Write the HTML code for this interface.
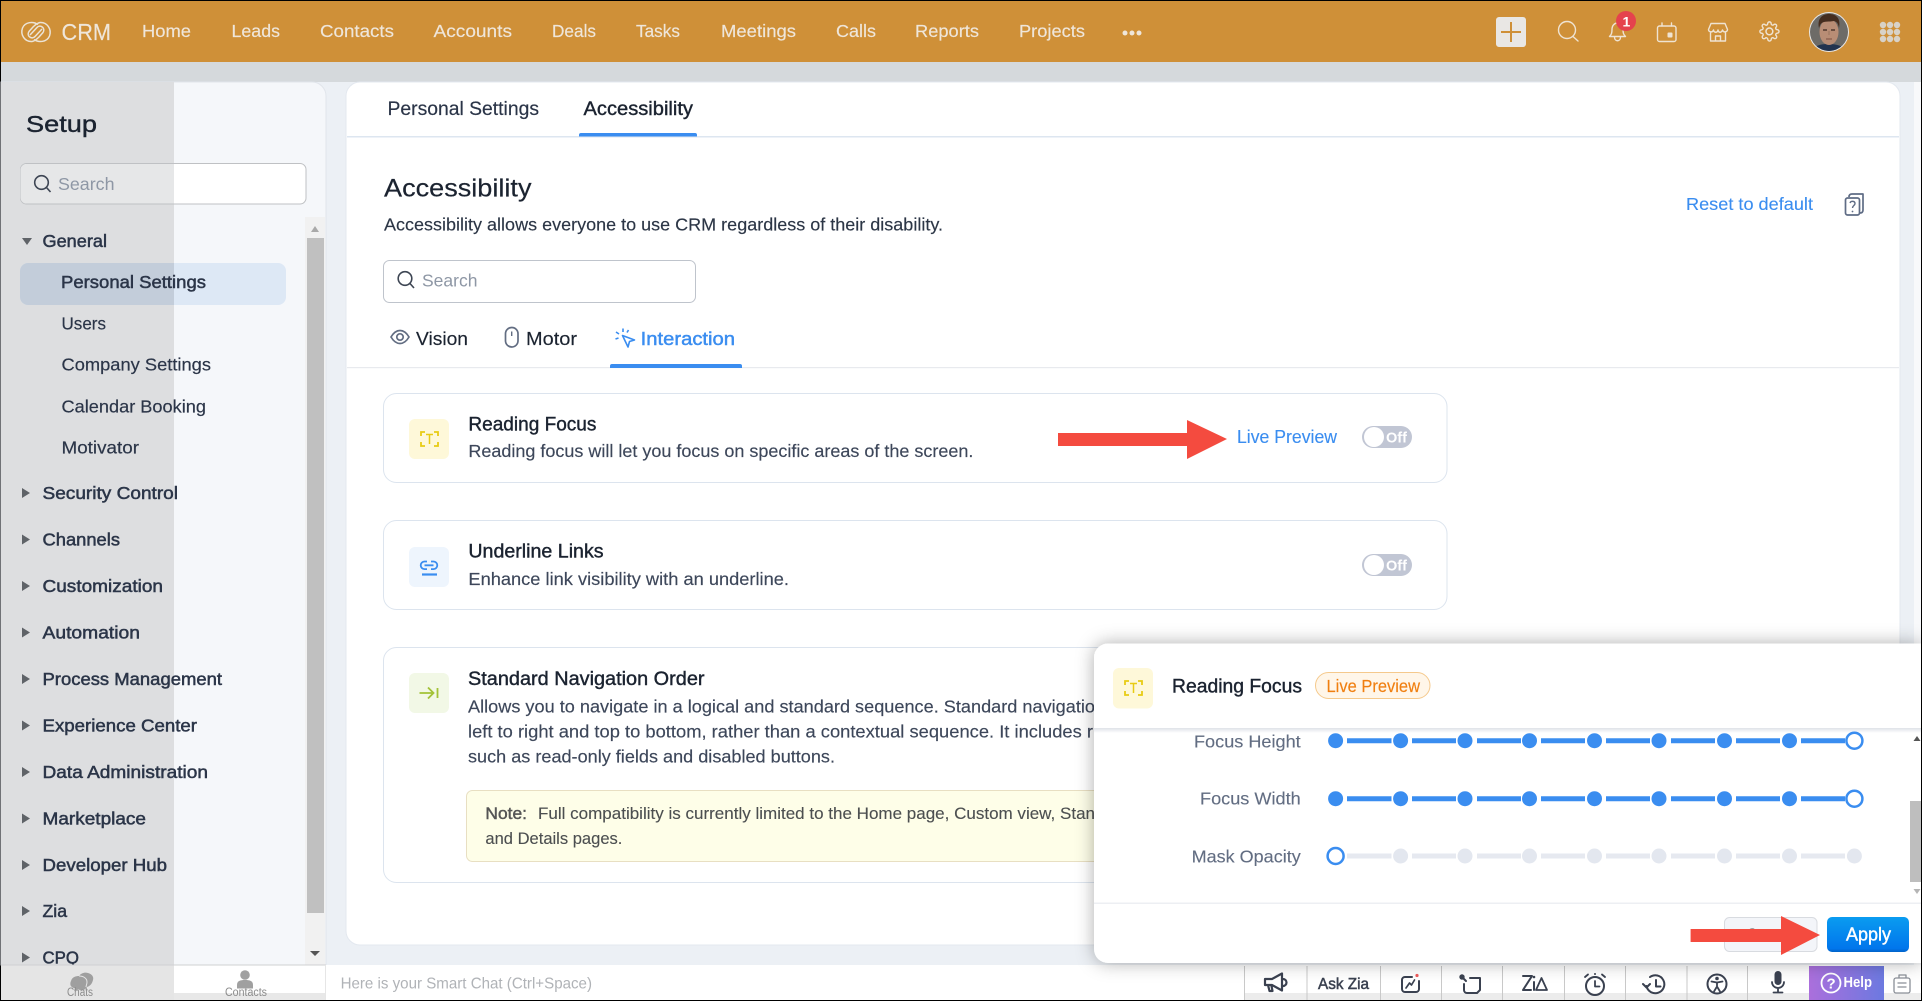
<!DOCTYPE html>
<html><head><meta charset="utf-8"><title>Accessibility</title>
<style>
html,body{margin:0;padding:0;background:#000;overflow:hidden}
svg{display:block}
text{font-family:"Liberation Sans",sans-serif;font-size:17.5px;white-space:pre}
.h{fill:#efe6da;stroke:#efe6da;stroke-width:.15}
.s{fill:#2b3548;stroke:#2b3548;stroke-width:.18}
.sm{fill:#2b3548;stroke:#2b3548;stroke-width:.5}
.d{fill:#1b2330;stroke:#1b2330;stroke-width:.4}
.p{fill:#3d475a;stroke:#3d475a;stroke-width:.15}
.b{fill:#3a8df0;stroke:#3a8df0;stroke-width:.12}
.ph{fill:#8e97a5}
.l{fill:#626d82;stroke:#626d82;stroke-width:.12}
</style></head><body>
<svg xmlns="http://www.w3.org/2000/svg" width="1922" height="1001" viewBox="0 0 1922 1001">
<defs>
<clipPath id="lft"><rect x="0" y="0" width="174" height="1001"/></clipPath>
<clipPath id="av"><circle cx="1829" cy="32" r="19"/></clipPath>
<filter id="sh" x="-5%" y="-10%" width="110%" height="120%"><feDropShadow dx="0" dy="0" stdDeviation="9" flood-color="#000" flood-opacity=".32"/></filter>
<linearGradient id="apply" x1="0" y1="0" x2="0" y2="1"><stop offset="0" stop-color="#0a9cf0"/><stop offset=".9" stop-color="#0176ec"/><stop offset="1" stop-color="#0163c8"/></linearGradient>
<linearGradient id="help" x1="0" y1="0" x2="1" y2="0"><stop offset="0" stop-color="#ab6fdc"/><stop offset="1" stop-color="#6c79e0"/></linearGradient>
<linearGradient id="hs" x1="0" y1="0" x2="0" y2="1"><stop offset="0" stop-color="#dfe2e8"/><stop offset="1" stop-color="#fff"/></linearGradient>
<g id="focus" fill="none" stroke="#e8cb14" stroke-width="1.800"><path d="M0 5V1H4M13 1h4V5M0 11v4h4M13 15h4v-4"/><path d="M5 3.500H12M8.500 3.500V13" stroke-width="1.500"/></g>
<g id="sl"><path d="M1347 0h44.500M1412 0h44M1477 0h44M1541 0h44M1606 0h44M1671 0h44M1736 0h44M1801 0h44" stroke="#3a8df0" stroke-width="5"/>
<g fill="#3a8df0"><circle cx="1335.600" cy="0" r="7.500"/><circle cx="1400.600" cy="0" r="7.500"/><circle cx="1465" cy="0" r="7.500"/><circle cx="1529.500" cy="0" r="7.500"/><circle cx="1594.500" cy="0" r="7.500"/><circle cx="1659" cy="0" r="7.500"/><circle cx="1724.500" cy="0" r="7.500"/><circle cx="1789.500" cy="0" r="7.500"/></g>
<circle cx="1854.400" cy="0" r="8" fill="#fff" stroke="#3a8df0" stroke-width="2.500"/></g>
</defs>

<!-- page -->
<rect x="1" y="1" width="1920" height="999" fill="#ecf0f5"/>
<rect x="1" y="1" width="1920" height="61" fill="#cf9038"/>
<rect x="1" y="62" width="1920" height="20" fill="#d5d9dc"/>
<rect x="1914" y="82" width="7" height="883" fill="#f8f9fb"/>

<!-- header -->
<g fill="none" stroke="#ebe3d6" stroke-width="1.500"><path d="M38 24.500C33 21 25 22 22.500 28C20 35 25 42 32 41.500C35 41 37 39 39 37L43 32.500C46 28 40 24 37 27.500L30 35"/><path d="M38 24.500C33 21 25 22 22.500 28C20 35 25 42 32 41.500C35 41 37 39 39 37L43 32.500C46 28 40 24 37 27.500L30 35" transform="rotate(180 36 32)"/></g>
<text class="h" x="61.500" y="40" style="font-size:23px" textLength="49.500" lengthAdjust="spacingAndGlyphs">CRM</text>
<text class="h" x="142" y="37" textLength="49" lengthAdjust="spacingAndGlyphs">Home</text>
<text class="h" x="231.500" y="37" textLength="48.500" lengthAdjust="spacingAndGlyphs">Leads</text>
<text class="h" x="320" y="37" textLength="74" lengthAdjust="spacingAndGlyphs">Contacts</text>
<text class="h" x="433.500" y="37" textLength="78.500" lengthAdjust="spacingAndGlyphs">Accounts</text>
<text class="h" x="552" y="37" textLength="44" lengthAdjust="spacingAndGlyphs">Deals</text>
<text class="h" x="636" y="37" textLength="44" lengthAdjust="spacingAndGlyphs">Tasks</text>
<text class="h" x="721" y="37" textLength="75" lengthAdjust="spacingAndGlyphs">Meetings</text>
<text class="h" x="836" y="37" textLength="40" lengthAdjust="spacingAndGlyphs">Calls</text>
<text class="h" x="915" y="37" textLength="64" lengthAdjust="spacingAndGlyphs">Reports</text>
<text class="h" x="1019" y="37" textLength="66" lengthAdjust="spacingAndGlyphs">Projects</text>
<g fill="#efe6da"><circle cx="1125" cy="33" r="2.500"/><circle cx="1132" cy="33" r="2.500"/><circle cx="1139" cy="33" r="2.500"/></g>
<rect x="1496" y="17" width="30" height="30" rx="3" fill="#e9e7e4"/>
<path d="M1501 32h20M1511 22v20" stroke="#cf9038" stroke-width="2"/>
<g fill="none" stroke="#efe3d2" stroke-width="1.400" stroke-linecap="round" stroke-linejoin="round">
<circle cx="1567" cy="30" r="8.500"/><path d="M1573 36.500L1578 41"/>
<path d="M1609.500 36.500c2-2 2.500-3.500 2.500-7 0-4 2.500-6.500 5.500-6.500s5.500 2.500 5.500 6.500c0 3.500.5 5 2.500 7zM1614.500 37c0 5 6 5 6 0"/>
<rect x="1657.500" y="26" width="18.500" height="15.500" rx="2"/><path d="M1662 23v3M1671.500 23v3"/>
<path d="M1711 23.500h14l2.500 6c0 2.500-4 3.500-5 .5-1 3-4 3-4.500 0-.5 3-4 3-4.500 0-1 3-5 2-5-.5zM1710.500 32.500V41h15V32.500M1715.500 41v-5h5v5"/>
</g>
<rect x="1667.500" y="32.500" width="5" height="5" rx="1" fill="#efe3d2"/>
<path transform="translate(1759 21) scale(.87)" fill="none" stroke="#efe3d2" stroke-width="1.600" d="M19.400 15a1.650 1.650 0 0 0 .33 1.820l.06.06a2 2 0 0 1 0 2.830 2 2 0 0 1-2.830 0l-.06-.06a1.650 1.650 0 0 0-1.820-.33 1.650 1.650 0 0 0-1 1.510V21a2 2 0 0 1-2 2 2 2 0 0 1-2-2v-.09A1.650 1.650 0 0 0 9 19.400a1.650 1.650 0 0 0-1.820.33l-.06.06a2 2 0 0 1-2.830 0 2 2 0 0 1 0-2.830l.06-.06a1.650 1.650 0 0 0 .33-1.820 1.650 1.650 0 0 0-1.510-1H3a2 2 0 0 1-2-2 2 2 0 0 1 2-2h.09A1.650 1.650 0 0 0 4.600 9a1.650 1.650 0 0 0-.33-1.820l-.06-.06a2 2 0 0 1 0-2.830 2 2 0 0 1 2.830 0l.06.06a1.650 1.650 0 0 0 1.820.33H9a1.650 1.650 0 0 0 1-1.510V3a2 2 0 0 1 2-2 2 2 0 0 1 2 2v.09a1.650 1.650 0 0 0 1 1.510 1.650 1.650 0 0 0 1.820-.33l.06-.06a2 2 0 0 1 2.830 0 2 2 0 0 1 0 2.830l-.06.06a1.650 1.650 0 0 0-.33 1.820V9a1.650 1.650 0 0 0 1.510 1H21a2 2 0 0 1 2 2 2 2 0 0 1-2 2h-.09a1.650 1.650 0 0 0-1.510 1z"/>
<circle cx="1769.400" cy="31.400" r="3.400" fill="none" stroke="#efe3d2" stroke-width="1.500"/>
<circle cx="1626" cy="21" r="10" fill="#e5424d"/>
<text x="1622.500" y="26.500" fill="#fff" style="font-size:14px;font-weight:bold">1</text>
<circle cx="1829" cy="32" r="20" fill="#e8e8e8"/>
<g clip-path="url(#av)"><rect x="1809" y="12" width="40" height="40" fill="#6d6b67"/>
<path d="M1812 52c2-7 9-8 17-8s15 2 17 8z" fill="#23344f"/>
<ellipse cx="1829" cy="32" rx="9.500" ry="13" fill="#b88d75"/>
<path d="M1819 28c-2-9 3-14 10-14s12 4 10 14c-1-5-2-6-5-7-5 1-10 0-12 2-2 1-2 3-3 5z" fill="#452d1f"/>
<path d="M1823 30h4M1831 30h4" stroke="#3c2a20" stroke-width="1.200"/><path d="M1829 31v4" stroke="#9a7560" stroke-width="1"/><path d="M1826 39h6" stroke="#7d4f41" stroke-width="1.100"/></g>
<g fill="#d8d2c8"><circle cx="1883" cy="25" r="3.200"/><circle cx="1890" cy="25" r="3.200"/><circle cx="1897" cy="25" r="3.200"/><circle cx="1883" cy="32" r="3.200"/><circle cx="1890" cy="32" r="3.200"/><circle cx="1897" cy="32" r="3.200"/><circle cx="1883" cy="39" r="3.200"/><circle cx="1890" cy="39" r="3.200"/><circle cx="1897" cy="39" r="3.200"/></g>

<!-- sidebar -->
<path d="M1 82H312a14 14 0 0 1 14 14V965H1z" fill="#f5f7fa" stroke="#e1e5eb"/>
<rect x="1" y="82" width="173" height="883" fill="#dddee0"/>
<text class="d" x="26" y="132" style="font-size:23px" textLength="71" lengthAdjust="spacingAndGlyphs">Setup</text>
<rect x="20.500" y="163.500" width="285.500" height="40.500" rx="6" fill="#fff" stroke="#bfc1c4"/>
<path clip-path="url(#lft)" d="M26.500 164H174V203.500H26.500a6 6 0 0 1-6-6V170a6 6 0 0 1 6-6z" fill="#e6e7e8"/>
<g fill="none" stroke="#3e4654" stroke-width="1.600"><circle cx="41.500" cy="182.500" r="6.800"/><path d="M46.500 187.500L50.500 192"/></g>
<text class="ph" x="58" y="190" textLength="56.500" lengthAdjust="spacingAndGlyphs">Search</text>
<path d="M22 238h10l-5 7z" fill="#5f6368"/>
<text class="sm" x="42.500" y="247" textLength="64.500" lengthAdjust="spacingAndGlyphs">General</text>
<rect x="20" y="263" width="266" height="42" rx="8" fill="#dde8f5"/>
<rect x="20" y="263" width="266" height="42" rx="8" fill="#c3cdda" clip-path="url(#lft)"/>
<text class="sm" x="61" y="288" textLength="145" lengthAdjust="spacingAndGlyphs">Personal Settings</text>
<text class="s" x="61.500" y="329.500" textLength="44.500" lengthAdjust="spacingAndGlyphs">Users</text>
<text class="s" x="61.500" y="370.500" textLength="149.500" lengthAdjust="spacingAndGlyphs">Company Settings</text>
<text class="s" x="61.500" y="412.500" textLength="144.500" lengthAdjust="spacingAndGlyphs">Calendar Booking</text>
<text class="s" x="61.500" y="453.500" textLength="77.500" lengthAdjust="spacingAndGlyphs">Motivator</text>
<text class="sm" x="42.500" y="499" textLength="135.500" lengthAdjust="spacingAndGlyphs">Security Control</text>
<text class="sm" x="42.500" y="545.500" textLength="77.500" lengthAdjust="spacingAndGlyphs">Channels</text>
<text class="sm" x="42.500" y="592" textLength="120.500" lengthAdjust="spacingAndGlyphs">Customization</text>
<text class="sm" x="42.500" y="638.500" textLength="97.500" lengthAdjust="spacingAndGlyphs">Automation</text>
<text class="sm" x="42.500" y="685" textLength="179.500" lengthAdjust="spacingAndGlyphs">Process Management</text>
<text class="sm" x="42.500" y="731.500" textLength="154.500" lengthAdjust="spacingAndGlyphs">Experience Center</text>
<text class="sm" x="42.500" y="778" textLength="165.500" lengthAdjust="spacingAndGlyphs">Data Administration</text>
<text class="sm" x="42.500" y="824.500" textLength="103.500" lengthAdjust="spacingAndGlyphs">Marketplace</text>
<text class="sm" x="42.500" y="871" textLength="124.500" lengthAdjust="spacingAndGlyphs">Developer Hub</text>
<text class="sm" x="42.500" y="917" textLength="24.500" lengthAdjust="spacingAndGlyphs">Zia</text>
<text class="sm" x="42.500" y="963.500" textLength="36.500" lengthAdjust="spacingAndGlyphs">CPQ</text>
<g fill="#5f6368"><path d="M22 488l8 5-8 5zM22 534.500l8 5-8 5zM22 581l8 5-8 5zM22 627.500l8 5-8 5zM22 674l8 5-8 5zM22 720.500l8 5-8 5zM22 767l8 5-8 5zM22 813.500l8 5-8 5zM22 860l8 5-8 5zM22 906l8 5-8 5zM22 952.500l8 5-8 5z"/></g>
<rect x="305" y="217" width="20" height="748" fill="#f1f1f1"/>
<rect x="307" y="238" width="17" height="675" fill="#c0c0c0"/>
<path d="M311 232l4-6 4 6z" fill="#a9a9a9"/>
<path d="M310 951h10l-5 5z" fill="#555"/>

<!-- main panel -->
<rect x="346" y="82" width="1554" height="863" rx="14" fill="#fff" stroke="#e3e8ef"/>
<rect x="347" y="136" width="1552" height="1.500" fill="#dde6f0"/>
<text class="s" x="387.500" y="115" style="font-size:19px" textLength="151.500" lengthAdjust="spacingAndGlyphs">Personal Settings</text>
<text class="d" x="583.500" y="115" style="font-size:19px" textLength="109.500" lengthAdjust="spacingAndGlyphs">Accessibility</text>
<path d="M579 136.500v-1.500a2 2 0 0 1 2-2H695a2 2 0 0 1 2 2v1.500z" fill="#3a8df0"/>
<text fill="#1b2330" stroke="#1b2330" stroke-width=".2" x="384" y="196.500" style="font-size:25px" textLength="147.500" lengthAdjust="spacingAndGlyphs">Accessibility</text>
<text fill="#2c3646" stroke="#2c3646" stroke-width=".15" x="384" y="230.500" textLength="559" lengthAdjust="spacingAndGlyphs">Accessibility allows everyone to use CRM regardless of their disability.</text>
<rect x="383.500" y="260.500" width="312" height="42" rx="6" fill="#fff" stroke="#bfc4cc"/>
<g fill="none" stroke="#3e4654" stroke-width="1.600"><circle cx="405" cy="278.500" r="6.800"/><path d="M410 283.500L414 288"/></g>
<text class="ph" x="422" y="286.500" textLength="55.500" lengthAdjust="spacingAndGlyphs">Search</text>
<text class="b" x="1686" y="210" textLength="127" lengthAdjust="spacingAndGlyphs">Reset to default</text>
<g fill="none" stroke="#5f6c85" stroke-width="1.700" stroke-linejoin="round"><rect x="1845.500" y="198" width="14" height="17" rx="2"/><path d="M1849 197c0-2 1-3 3-3h11v16c0 2-1 3-3 3"/><path d="M1850 203c1-2.500 5-2 5 .5 0 2-2.500 2-2.500 4.500" stroke-width="1.400"/></g>
<circle cx="1852.500" cy="211.500" r=".9" fill="#5f6c85"/>

<!-- sub tabs -->
<rect x="347" y="367" width="1552" height="1.200" fill="#e8eaee"/>
<g fill="none" stroke="#626d82" stroke-width="1.700"><path d="M391 337c3-5 6-6.500 9-6.500s6 1.500 9 6.500c-3 5-6 6.500-9 6.500s-6-1.500-9-6.500z"/><circle cx="400" cy="337" r="3.200"/><rect x="505.500" y="327.500" width="12.500" height="19.500" rx="6.200"/><path d="M511.700 331.500v4.500" stroke-width="1.400"/></g>
<text fill="#1b2330" stroke="#1b2330" stroke-width=".15" x="416" y="345" style="font-size:18px" textLength="52" lengthAdjust="spacingAndGlyphs">Vision</text>
<text fill="#1b2330" stroke="#1b2330" stroke-width=".15" x="526" y="345" style="font-size:18px" textLength="51" lengthAdjust="spacingAndGlyphs">Motor</text>
<g fill="none" stroke="#3a8df0" stroke-width="1.600" stroke-linejoin="round"><path d="M622.500 335.500l12 4.500-5 1.500-1.500 5.500z"/><path d="M623 328.500v3.500M616 332l3 2M615.500 339l3-1M628.500 330l-1.500 2.500"/></g>
<text fill="#3a8df0" stroke="#3a8df0" stroke-width=".45" x="640.700" y="345" style="font-size:18px" textLength="94.300" lengthAdjust="spacingAndGlyphs">Interaction</text>
<path d="M610 368v-2a2 2 0 0 1 2-2H740a2 2 0 0 1 2 2v2z" fill="#3a8df0"/>

<!-- card 1 -->
<rect x="383.500" y="393.500" width="1063.500" height="89" rx="13" fill="#fff" stroke="#dce4ee"/>
<rect x="409" y="419" width="40" height="40" rx="6" fill="#fef8d9"/>
<use href="#focus" x="421" y="431"/>
<text class="d" x="468.400" y="430.500" style="font-size:19px" textLength="128" lengthAdjust="spacingAndGlyphs">Reading Focus</text>
<text class="p" x="468.400" y="457" textLength="505" lengthAdjust="spacingAndGlyphs">Reading focus will let you focus on specific areas of the screen.</text>
<text class="b" x="1237" y="443" style="font-size:18px" textLength="100" lengthAdjust="spacingAndGlyphs">Live Preview</text>
<rect x="1362" y="426" width="50" height="22" rx="11" fill="#c1c6d4"/>
<circle cx="1374" cy="437" r="10" fill="#fff"/>
<text x="1386" y="442.700" fill="#fff" style="font-size:15px;font-weight:bold" textLength="21" lengthAdjust="spacingAndGlyphs">Off</text>
<path d="M1058 433h129v-13l40 19-40 20v-13h-129z" fill="#f44b3f"/>

<!-- card 2 -->
<rect x="383.500" y="520.500" width="1063.500" height="89" rx="13" fill="#fff" stroke="#dce4ee"/>
<rect x="409" y="547" width="40" height="40" rx="6" fill="#eef5fd"/>
<g fill="none" stroke="#3a8df0" stroke-width="1.800"><path d="M427 561.500h-2.500a3.800 3.800 0 0 0 0 7.600H427M431 561.500h2.500a3.800 3.800 0 0 1 0 7.600H431M424.500 565.300h9"/><path d="M422 574.500h15" stroke-width="2.200"/></g>
<text class="d" x="468.400" y="557.500" style="font-size:19px" textLength="135.200" lengthAdjust="spacingAndGlyphs">Underline Links</text>
<text class="p" x="468.400" y="585" textLength="320.600" lengthAdjust="spacingAndGlyphs">Enhance link visibility with an underline.</text>
<rect x="1362" y="554" width="50" height="22" rx="11" fill="#c1c6d4"/>
<circle cx="1374" cy="565" r="10" fill="#fff"/>
<text x="1386" y="570.700" fill="#fff" style="font-size:15px;font-weight:bold" textLength="21" lengthAdjust="spacingAndGlyphs">Off</text>

<!-- card 3 -->
<rect x="383.500" y="647.500" width="1063.500" height="235" rx="13" fill="#fff" stroke="#dce4ee"/>
<rect x="409" y="673" width="40" height="40" rx="6" fill="#f2f8e6"/>
<g fill="none" stroke="#a3c237" stroke-width="1.800"><path d="M419.500 693h14M428 687.500l5.500 5.500-5.500 5.500M437.500 688v10"/></g>
<text class="d" x="468" y="685" style="font-size:19px" textLength="236.500" lengthAdjust="spacingAndGlyphs">Standard Navigation Order</text>
<text class="p" x="468" y="712.700" textLength="627" lengthAdjust="spacingAndGlyphs">Allows you to navigate in a logical and standard sequence. Standard navigatio</text>
<text class="p" x="468" y="737.700" textLength="625" lengthAdjust="spacingAndGlyphs">left to right and top to bottom, rather than a contextual sequence. It includes r</text>
<text class="p" x="468" y="762.700" textLength="367" lengthAdjust="spacingAndGlyphs">such as read-only fields and disabled buttons.</text>
<rect x="466.500" y="790.500" width="800" height="71" rx="6" fill="#fefee8" stroke="#e8dfc2"/>
<text fill="#555" stroke="#555" stroke-width=".45" x="485.400" y="819" style="font-size:16.500px" textLength="41.600" lengthAdjust="spacingAndGlyphs">Note:</text>
<text fill="#4c4f50" stroke="#4c4f50" stroke-width=".12" x="538" y="819" style="font-size:16.500px" textLength="557" lengthAdjust="spacingAndGlyphs">Full compatibility is currently limited to the Home page, Custom view, Stan</text>
<text fill="#4c4f50" stroke="#4c4f50" stroke-width=".12" x="485.400" y="844" style="font-size:16.500px" textLength="137" lengthAdjust="spacingAndGlyphs">and Details pages.</text>

<!-- bottom bar -->
<rect x="1" y="965" width="1920" height="35" fill="#fff"/>
<rect x="1" y="965" width="173" height="35" fill="#e5e5e5"/>
<rect x="174" y="993" width="151" height="7" fill="#e8e8e8"/>
<rect x="1" y="964.500" width="325" height="1" fill="#cfd0d2"/>
<rect x="1244" y="993" width="677" height="7" fill="#ececec"/>
<rect x="325" y="965" width="1" height="35" fill="#e6e6e6"/>
<path d="M72 987c-2-1-2-4-1-6 1-4 5-5 8-5 2-3 6-4 9-3 4 1 6 4 5 7-1 4-3 6-6 7-1 2-3 3-5 3-2 0-3 0-4-1l-4 2 1-3c-1 0-2 0-3-1z" fill="#9f9f9f"/>
<path d="M79 976c4 0 8 2 8 6 0 2-1 4-1 5" fill="none" stroke="#e5e5e5" stroke-width="1"/>
<text x="67" y="996" fill="#8b8b8b" style="font-size:11.500px" textLength="26" lengthAdjust="spacingAndGlyphs">Chats</text>
<circle cx="245" cy="975" r="4.800" fill="#a0a0a0"/><path d="M237 988.500v-3.500c0-4 3-5 8-5s8 1 8 5v3.500z" fill="#a0a0a0"/>
<text x="225" y="996" fill="#8b8b8b" style="font-size:11.500px" textLength="42" lengthAdjust="spacingAndGlyphs">Contacts</text>
<text fill="#b0b3b7" x="340.600" y="988.700" style="font-size:16px" textLength="251.400" lengthAdjust="spacingAndGlyphs">Here is your Smart Chat (Ctrl+Space)</text>
<g fill="#c9c9c9"><rect x="1244" y="966" width="1" height="34"/><rect x="1306.500" y="966" width="1" height="34"/><rect x="1380" y="966" width="1" height="34"/><rect x="1441" y="966" width="1" height="34"/><rect x="1502" y="966" width="1" height="34"/><rect x="1564" y="966" width="1" height="34"/><rect x="1625" y="966" width="1" height="34"/><rect x="1686.500" y="966" width="1" height="34"/><rect x="1747" y="966" width="1" height="34"/></g>
<g fill="none" stroke="#3a4150" stroke-width="2.200" stroke-linejoin="round" stroke-linecap="round">
<path d="M1265 979h7l10-5.500v17l-10-5.500h-7zM1268 985l1.500 6h3l-1-5M1282 979h1a3.500 3.500 0 0 1 0 7h-1"/>
<path d="M1412 977h-7a3 3 0 0 0-3 3v9a3 3 0 0 0 3 3h11a3 3 0 0 0 3-3v-8" stroke-width="2"/><path d="M1406 988l3.500-5 2 2 3-5" stroke-width="1.700"/>
<path d="M1470 978h10v12l-3 3h-10a3 3 0 0 1-3-3v-6" stroke-width="2"/><path d="M1462 977l4 4" stroke-width="2"/>
<path d="M1523 976h9l-9 14h8M1534 990l0-8" stroke-width="2"/><path d="M1536 990h11l-5.500-12z" stroke-width="1.800"/>
<circle cx="1595" cy="986" r="9" stroke-width="2"/><path d="M1595 981v5.500h4.500M1585 977l3-2.500M1605 977l-3-2.500" stroke-width="1.800"/>
<path d="M1650 977a9 9 0 1 1-3.500 9M1643 984l3.500 3.500 3.500-3.500M1656 980v6.500h4.500" stroke-width="2"/>
<circle cx="1717" cy="984" r="9.500" stroke-width="2"/><path d="M1711.500 981.500l5.500 1 5.500-1M1717 982.500v4M1717 986.500l-3 5M1717 986.500l3 5" stroke-width="1.800"/>
<path d="M1772 982a6 6 0 0 0 12 0M1778 988v4M1773.500 992.500h9" stroke-width="1.800"/>
<path d="M1896 978h12a2 2 0 0 1 2 2v11a2 2 0 0 1-2 2h-12a2 2 0 0 1-2-2v-11a2 2 0 0 1 2-2zM1899 978v-3h7v3M1898 983h8M1898 987h8" stroke="#8a8f97" stroke-width="1.300"/>
</g>
<circle cx="1462" cy="977" r="2.700" fill="#3a4150"/>
<circle cx="1417" cy="975.500" r="1.600" fill="#ef5a5a"/>
<circle cx="1595" cy="974" r="1" fill="#3a4150"/>
<circle cx="1534" cy="977" r="1.300" fill="#3a4150"/>
<circle cx="1717" cy="978.500" r="1.800" fill="#3a4150"/>
<rect x="1774.500" y="971" width="7" height="14" rx="3.500" fill="#3a4150"/>
<text fill="#3a4150" stroke="#3a4150" stroke-width=".5" x="1318" y="989" style="font-size:16px" textLength="51" lengthAdjust="spacingAndGlyphs">Ask Zia</text>
<rect x="1809" y="966" width="75" height="34" fill="url(#help)"/>
<circle cx="1831" cy="983" r="9.500" fill="none" stroke="#fff" stroke-width="1.800"/>
<text x="1826.500" y="988.500" fill="#fff" style="font-size:15px;font-weight:bold">?</text>
<text x="1843.500" y="987" fill="#fff" style="font-size:14.500px;font-weight:bold" textLength="28.500" lengthAdjust="spacingAndGlyphs">Help</text>

<!-- popup -->
<path d="M1108 643.500H1921V963H1108a14 14 0 0 1-14-14V657.500a14 14 0 0 1 14-14z" fill="#fff" filter="url(#sh)"/>
<rect x="1094" y="728" width="827" height="5" fill="url(#hs)"/>
<rect x="1113" y="668" width="40" height="40.500" rx="6" fill="#fef8d9"/>
<use href="#focus" x="1125" y="680"/>
<text class="d" x="1172" y="692.700" style="font-size:19px" textLength="130" lengthAdjust="spacingAndGlyphs">Reading Focus</text>
<rect x="1315.500" y="672.500" width="114.500" height="26" rx="13" fill="#fff6e9" stroke="#f5c98c"/>
<text fill="#f07f10" stroke="#f07f10" stroke-width=".15" x="1326.500" y="692" textLength="93.500" lengthAdjust="spacingAndGlyphs">Live Preview</text>
<text class="l" x="1194" y="747.300" textLength="106.700" lengthAdjust="spacingAndGlyphs">Focus Height</text>
<text class="l" x="1200" y="804.700" textLength="100.700" lengthAdjust="spacingAndGlyphs">Focus Width</text>
<text class="l" x="1191.700" y="862.700" textLength="109" lengthAdjust="spacingAndGlyphs">Mask Opacity</text>
<use href="#sl" y="740.700"/>
<use href="#sl" y="798.700"/>
<path d="M1347 856h44.500M1412 856h44M1477 856h44M1541 856h44M1606 856h44M1671 856h44M1736 856h44M1801 856h44" stroke="#e6e9f0" stroke-width="5"/>
<g fill="#e3e7ef"><circle cx="1400.600" cy="856" r="7.500"/><circle cx="1465" cy="856" r="7.500"/><circle cx="1529.500" cy="856" r="7.500"/><circle cx="1594.500" cy="856" r="7.500"/><circle cx="1659" cy="856" r="7.500"/><circle cx="1724.500" cy="856" r="7.500"/><circle cx="1789.500" cy="856" r="7.500"/><circle cx="1854.400" cy="856" r="7.500"/></g>
<circle cx="1335.600" cy="856" r="8" fill="#fff" stroke="#3a8df0" stroke-width="2.500"/>
<rect x="1910" y="801" width="11" height="81" fill="#bebebe"/>
<path d="M1913.500 741l3.500-5 3.500 5z" fill="#555"/>
<path d="M1913.500 889h7l-3.500 5z" fill="#b5b5b5"/>
<rect x="1094" y="902.500" width="827" height="1.500" fill="#edeff3"/>
<rect x="1724.500" y="917.500" width="92.500" height="34" rx="5" fill="#f3f5f9" stroke="#d8dbe0"/>
<text fill="#444" x="1746" y="940.500" textLength="50" lengthAdjust="spacingAndGlyphs">Cancel</text>
<rect x="1827" y="917" width="82" height="35" rx="5" fill="url(#apply)"/>
<text fill="#fff" stroke="#fff" stroke-width=".4" x="1846" y="940.700" style="font-size:18px" textLength="45" lengthAdjust="spacingAndGlyphs">Apply</text>
<path d="M1690.600 929H1781V916L1820 935 1781 955V942H1690.600z" fill="#f44b3f"/>
</svg>
</body></html>
